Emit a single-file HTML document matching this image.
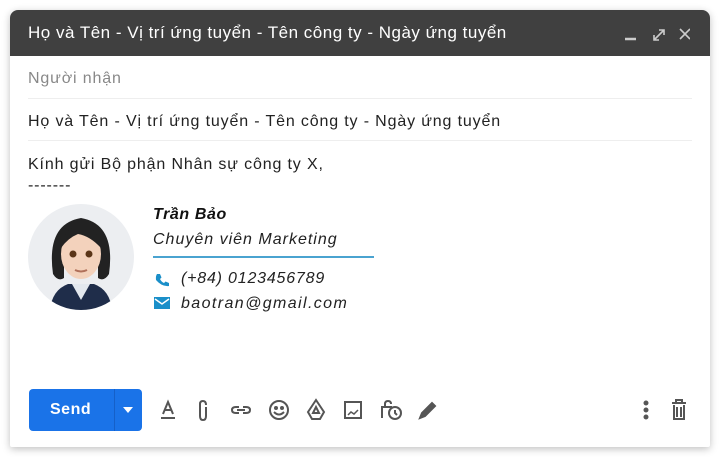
<!DOCTYPE html>
<html><head><meta charset="utf-8"><style>
body{margin:0;width:720px;height:457px;background:#fff;font-family:"Liberation Sans",sans-serif;overflow:hidden;position:relative}
.win{position:absolute;left:10px;top:10px;width:700px;height:437px;background:#fff;border-radius:8px 8px 2px 2px;box-shadow:0 2px 8px rgba(0,0,0,.25);overflow:hidden}
.hd{height:46px;background:#404040;color:#fff;font-size:17px;line-height:46px;padding-left:18px;position:relative;letter-spacing:0.5px}
.t{position:absolute;left:18px;font-size:16px;letter-spacing:0.85px}
.row{position:absolute;left:18px;width:664px;border-bottom:1px solid #eee}
.abs{position:absolute}
</style></head><body>
<div class="win">
<div class="hd">Họ và Tên - Vị trí ứng tuyển - Tên công ty - Ngày ứng tuyển
<svg class="abs" style="left:610px;top:16px" width="70" height="16" fill="none" stroke="#ccc" stroke-width="1.6">
<line x1="5" y1="13" x2="16" y2="13" stroke-width="2.5"/>
<path d="M34 14 L44 4 M39 4 H44 V9 M34 9 V14 H39"/>
<path d="M60 3 L70 13 M70 3 L60 13"/></svg>
</div>
<div class="row" style="top:46px;height:42px"></div>
<div class="t" style="top:60px;color:#888">Người nhận</div>
<div class="row" style="top:88px;height:42px"></div>
<div class="t" style="top:103px;color:#222">Họ và Tên - Vị trí ứng tuyển - Tên công ty - Ngày ứng tuyển</div>
<div class="t" style="top:146px;color:#222">Kính gửi Bộ phận Nhân sự công ty X,</div>
<div class="t" style="top:167px;color:#222">-------</div>
<div class="abs" style="left:18px;top:194px;width:106px;height:106px;border-radius:50%;background:#eceef1;overflow:hidden">
<svg width="106" height="106"><path d="M22 106 Q24 86 40 80 H66 Q82 86 84 106Z" fill="#1f2d4a"/><path d="M44 80 L53 96 L62 80Z" fill="#e3e8ee"/>
<path d="M25 70 Q18 20 53 14 Q88 20 81 70 Q76 78 70 74 V40 H36 V74 Q30 78 25 70Z" fill="#222"/>
<ellipse cx="53" cy="50" rx="20" ry="25" fill="#f3d2bc"/><path d="M33 44 Q36 22 53 22 Q70 22 73 44 Q62 32 50 30 Q40 34 33 44Z" fill="#222"/>
<circle cx="45" cy="50" r="3.5" fill="#5a3518"/><circle cx="61" cy="50" r="3.5" fill="#5a3518"/><path d="M47 66 Q53 69 59 66" stroke="#b0705a" stroke-width="2" fill="none"/></svg></div>
<div class="abs" style="left:143px;top:196px;font-size:16px;font-weight:bold;font-style:italic;color:#111;letter-spacing:0.6px">Trần Bảo</div>
<div class="abs" style="left:143px;top:221px;font-size:16px;font-style:italic;color:#222;letter-spacing:1px">Chuyên viên Marketing</div>
<div class="abs" style="left:143px;top:246px;width:221px;height:2px;background:#4aa3d0"></div>
<svg class="abs" style="left:144px;top:262px" width="16" height="16"><path d="M3 2 L6 2 L7.5 5.5 L6 7 Q7.5 10 10 11 L11.5 9.5 L15 11 L15 14 Q8 15 2 8 Q1.5 4 3 2Z" fill="#1a8fc9"/></svg>
<div class="abs" style="left:171px;top:260px;font-size:16px;font-style:italic;color:#222;letter-spacing:0.8px">(+84) 0123456789</div>
<svg class="abs" style="left:144px;top:287px" width="16" height="13"><rect width="16" height="12" fill="#1a8fc9"/><path d="M1 2 L8 7 L15 2" stroke="#fff" stroke-width="1.5" fill="none"/></svg>
<div class="abs" style="left:171px;top:285px;font-size:16px;font-style:italic;color:#222;letter-spacing:1.4px">baotran@gmail.com</div>
<div class="abs" style="left:19px;top:379px;width:113px;height:42px;background:#1a73e8;border-radius:4px;color:#fff;font-size:16px;font-weight:bold">
<span class="abs" style="left:21px;top:12px;letter-spacing:0.5px">Send</span><div class="abs" style="left:85px;top:0;width:1px;height:42px;background:#1560c8"></div>
<svg class="abs" style="left:93px;top:17px" width="12" height="8"><path d="M1 1 H11 L6 7Z" fill="#fff"/></svg></div>
<svg class="abs" style="left:145px;top:387px" width="540" height="26" fill="none" stroke="#555" stroke-width="2">
<path d="M8 17 L13 5 L18 17 M10 13 H16"/><line x1="6" y1="21" x2="20" y2="21"/>
<path d="M51 10 V19 Q51 23 48 23 Q45 23 45 19 V7 Q45 4 48 4 Q51 4 51 8"/>
<path d="M84 10 H81 Q77 10 77 13 Q77 16 81 16 H84 M88 10 H91 Q95 10 95 13 Q95 16 91 16 H88 M82 13 H90"/>
<circle cx="124" cy="13" r="9"/><circle cx="121" cy="11" r="1" fill="#555"/><circle cx="127" cy="11" r="1" fill="#555"/><path d="M119 15 Q124 20 129 15"/>
<path d="M153 15 L161 3 L169 15 L165 22 H157Z M158 16 L161 10 L164 16Z"/>
<g transform="translate(-11,0)">
<rect x="201" y="5" width="16" height="16"/><path d="M204 18 L207 15 L210 17 L214 13" stroke-width="1.5"/>
<path d="M238 21 V10 H248 M241 10 V7 Q241 4 244 4 Q247 4 247 7"/><circle cx="251" cy="16" r="6"/><path d="M251 13 V16 L253 18"/>
<path d="M276 21 L278 16 L288 6 L291 9 L281 19Z" fill="#555"/>
</g>
<g transform="translate(-10,0)">
<circle cx="501" cy="6" r="1.5" fill="#555"/><circle cx="501" cy="13" r="1.5" fill="#555"/><circle cx="501" cy="20" r="1.5" fill="#555"/>
<path d="M527 6 H541 M531 6 V3 H537 V6 M529 8 V22 H539 V8 M532 10 V20 M536 10 V20"/></g></svg>
</div>
</body></html>
